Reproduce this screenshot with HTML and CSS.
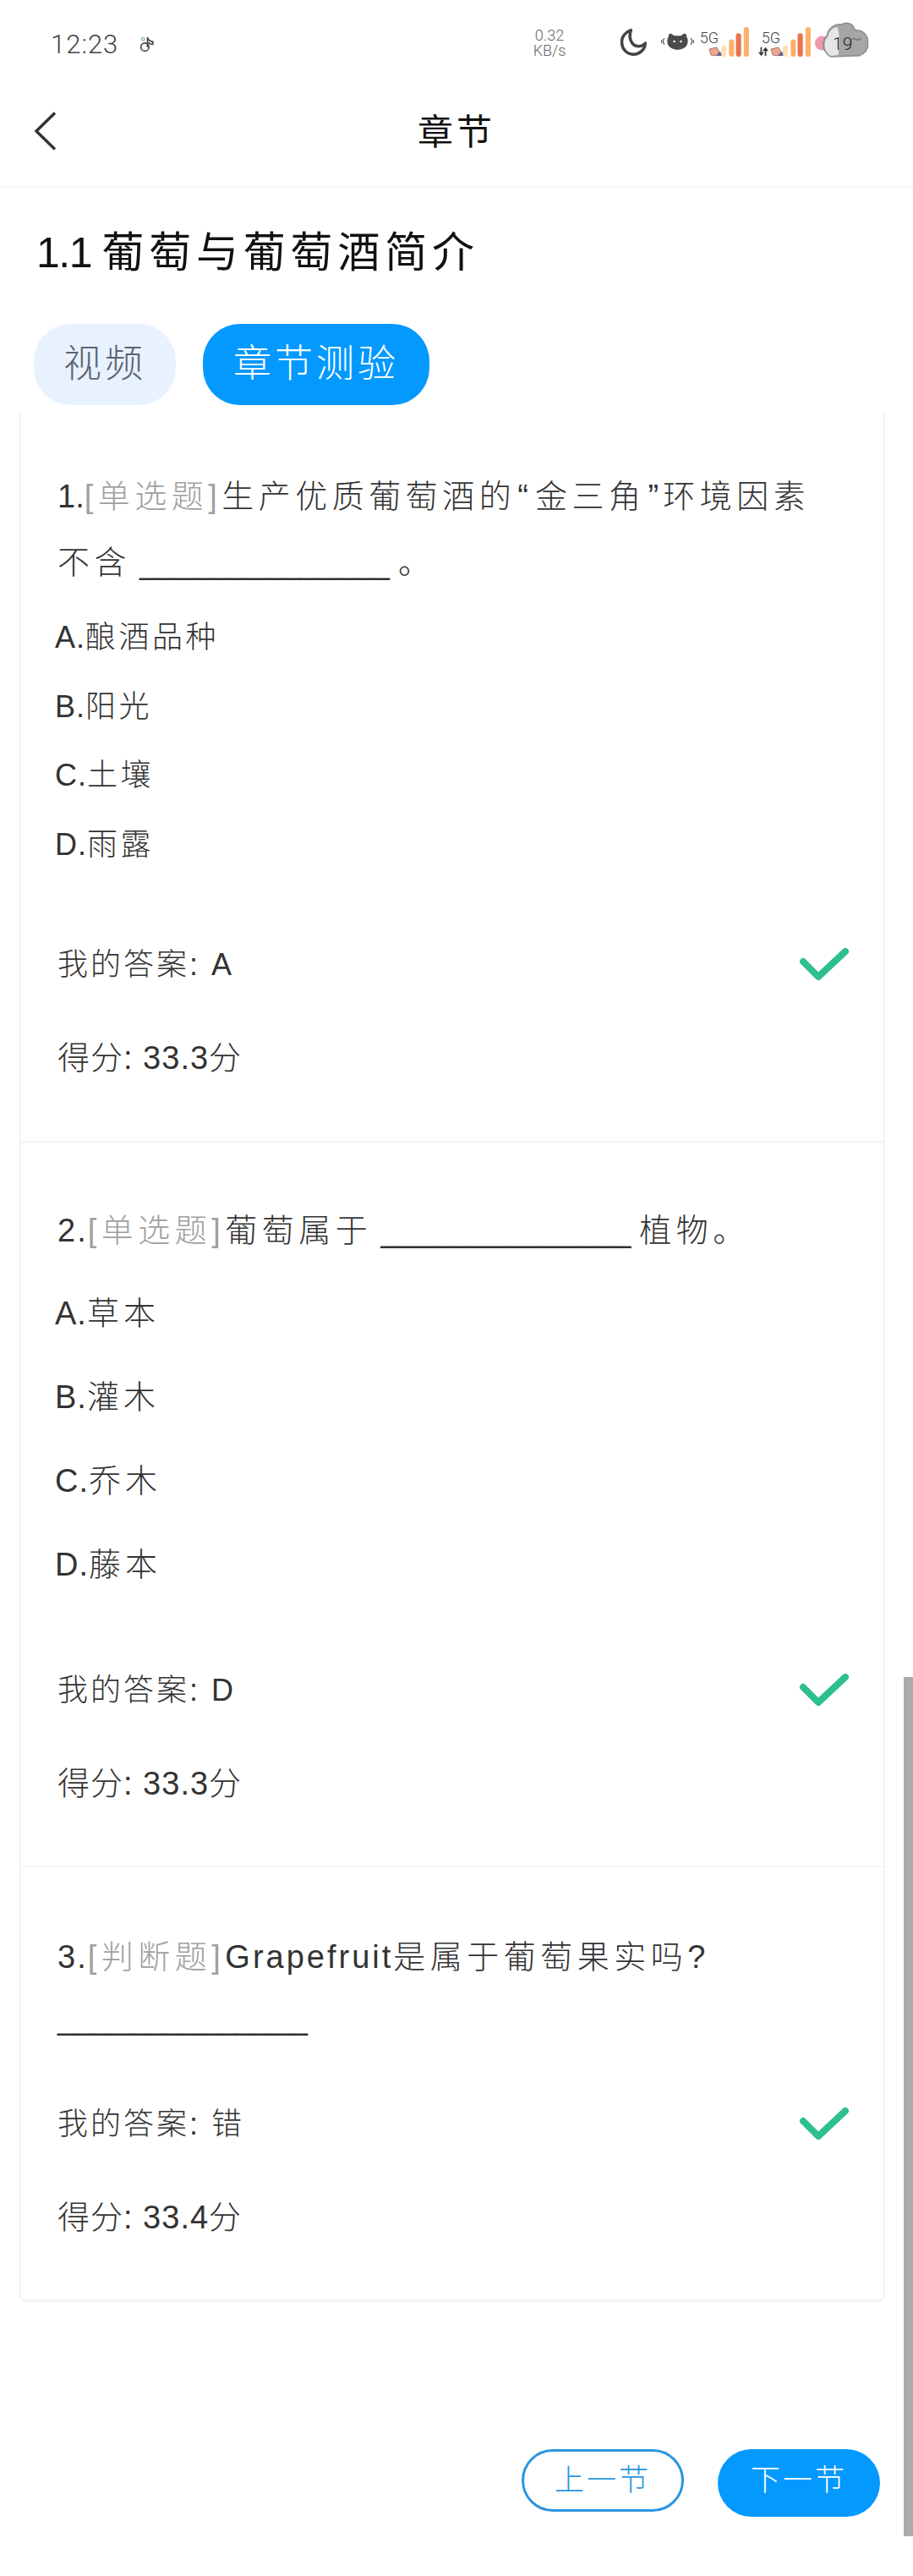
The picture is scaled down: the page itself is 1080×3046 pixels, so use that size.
FILE: index.html
```html
<!DOCTYPE html>
<html lang="zh-CN">
<head>
<meta charset="utf-8">
<title>章节</title>
<link rel="stylesheet" href="styles.css">
</head>
<body>
<div class="page">
  <header class="status">
    <div class="status-left">
      <span class="clock">12:23</span>
      <svg class="tiktok" viewBox="0 0 20 20" fill="none" stroke="#444" stroke-width="1.6"><circle cx="7" cy="13" r="4.5"/><path d="M10 13V2c.6 3 3 4.5 6 5v3c-2 0-4-1-5-2"/><circle cx="5" cy="4" r="1.6" stroke="#6aa" stroke-width="1"/></svg>
    </div>
    <div class="status-right">
      <div class="speed"><span>0.32</span><span>KB/s</span></div>
      <svg class="moon" viewBox="0 0 32 32" fill="none"><path d="M13 2.500C6.500 4.500 2.500 10 2.500 16a13.500 13.500 0 0 0 27 1.500c-2 2.500-5 3.500-8 3.500C14 21 9.500 12 13 2.500z" stroke="#444" stroke-width="3.400" stroke-linejoin="round"/></svg>
      <svg class="cat" viewBox="0 0 40 22"><path d="M9 5c0-3 2-4 4-3l3 2h8l3-2c2-1 4 0 4 3 2 3 2 8 0 11-2 3-7 5-11 5s-9-2-11-5c-2-3-2-8 0-11z" fill="#4a4a4a"/><circle cx="16" cy="11" r="1.300" fill="#fff"/><circle cx="24" cy="11" r="1.300" fill="#fff"/><path d="M4 7c-2 2-2 6 0 8M36 7c2 2 2 6 0 8M1 9c-.7 1-.7 3 0 4M39 9c.7 1 .7 3 0 4" stroke="#555" stroke-width="1.300" fill="none"/></svg>
      <div class="signal">
        <div class="signal-label">
          <span class="net">5G</span>
          <svg class="pig" viewBox="0 0 20 12"><path d="M9 3l11 8H9z" fill="#5a5fa8"/><path d="M1 3l9-2 3 6-4 4-6-1z" fill="#e8a890" stroke="#a4604c" stroke-width=".8"/></svg>
        </div>
        <svg class="bars" viewBox="0 0 32 34"><rect x="0" y="21" width="6" height="13" rx="3" fill="#fbe3b5"/><rect x="9" y="14" width="6" height="20" rx="3" fill="#fbb26b"/><rect x="17" y="7" width="6" height="27" rx="3" fill="#e8734f"/><rect x="26" y="0" width="6" height="34" rx="3" fill="#fbb26b"/></svg>
      </div>
      <div class="signal signal-second">
        <div class="signal-label signal-label-wide">
          <span class="net">5G</span>
          <div class="signal-sub">
            <svg class="arrows" viewBox="0 0 14 12"><path d="M3 0h2v7h3L4 12 0 7h3zM9 12h2V5h3L10 0 6 5h3z" fill="#333"/></svg>
            <svg class="pig" viewBox="0 0 20 12"><path d="M9 3l11 8H9z" fill="#5a5fa8"/><path d="M1 3l9-2 3 6-4 4-6-1z" fill="#e8a890" stroke="#a4604c" stroke-width=".8"/></svg>
          </div>
        </div>
        <svg class="bars" viewBox="0 0 32 34"><rect x="0" y="21" width="6" height="13" rx="3" fill="#fbe3b5"/><rect x="9" y="14" width="6" height="20" rx="3" fill="#fbb26b"/><rect x="17" y="7" width="6" height="27" rx="3" fill="#e8734f"/><rect x="26" y="0" width="6" height="34" rx="3" fill="#fbb26b"/></svg>
      </div>
      <div class="weather">
        <svg class="cloud" viewBox="0 0 64 42"><circle cx="9" cy="25" r="8.500" fill="#ee97ac"/><path d="M14 36C8 30 10 20 15 16 16 7 24 2 32 3 38-1 46 2 48 10 56 8 64 16 63 25 64 34 56 41 48 40L20 41C17 41 15 38 14 36z" fill="#a6a6a6" stroke="#8c8c8c" stroke-width="1.500"/><path d="M15 36C10 30 12 21 16 17 17 11 21 7 27 6 30 15 30 28 28 39L20 40C18 40 16 38 15 36z" fill="#e6e6e6"/><path d="M44 21c2-3 4-1 6 0s3 0 5-2" stroke="#777" stroke-width="1.500" fill="none"/></svg>
        <span class="temp">19</span>
      </div>
    </div>
  </header>

  <nav class="nav">
    <svg class="back" viewBox="0 0 26 46" fill="none"><path d="M24 1.500L2 23l22 21.500" stroke="#333" stroke-width="3.400"/></svg>
    <h1 class="nav-title">章节</h1>
  </nav>

  <h2 class="chapter"><span class="chapter-num">1.1 </span>葡萄与葡萄酒简介</h2>

  <div class="tabs">
    <span class="tab">视频</span>
    <span class="tab tab-active">章节测验</span>
  </div>

  <main class="card">
    <section class="sec sec-first">
      <p class="question"><span class="num">1.</span><span class="kind">[单选题]</span>生产优质葡萄酒的<span class="quote quote-open">“</span>金三角<span class="quote quote-close">”</span>环境因素<br>不含 <span class="blank">______________</span> 。</p>
      <ul class="options">
        <li><span class="lab">A.</span>酿酒品种</li>
        <li><span class="lab">B.</span>阳光</li>
        <li><span class="lab">C.</span>土壤</li>
        <li><span class="lab">D.</span>雨露</li>
      </ul>
      <div class="answer">
        <span>我的答案: A</span>
        <svg class="check" viewBox="0 0 60 42" fill="none"><path d="M5 16L23 34 55 4" stroke="#2cc08c" stroke-width="8" stroke-linecap="round" stroke-linejoin="round"/></svg>
      </div>
      <div class="score">得分: 33.3分</div>
    </section>

    <section class="sec sec-second">
      <p class="question"><span class="num num-wide">2.</span><span class="kind">[单选题]</span>葡萄属于 <span class="blank">______________</span> 植物。</p>
      <ul class="options options-wide">
        <li><span class="lab">A.</span>草本</li>
        <li><span class="lab">B.</span>灌木</li>
        <li><span class="lab">C.</span>乔木</li>
        <li><span class="lab">D.</span>藤本</li>
      </ul>
      <div class="answer">
        <span>我的答案: D</span>
        <svg class="check" viewBox="0 0 60 42" fill="none"><path d="M5 16L23 34 55 4" stroke="#2cc08c" stroke-width="8" stroke-linecap="round" stroke-linejoin="round"/></svg>
      </div>
      <div class="score">得分: 33.3分</div>
    </section>

    <section class="sec sec-third">
      <p class="question"><span class="num num-wide">3.</span><span class="kind">[判断题]</span><span class="latin">Grapefruit</span>是属于葡萄果实吗?<br><span class="blank">______________</span></p>
      <div class="answer">
        <span>我的答案: 错</span>
        <svg class="check" viewBox="0 0 60 42" fill="none"><path d="M5 16L23 34 55 4" stroke="#2cc08c" stroke-width="8" stroke-linecap="round" stroke-linejoin="round"/></svg>
      </div>
      <div class="score">得分: 33.4分</div>
    </section>
  </main>

  <footer class="pager">
    <span class="btn btn-outline">上一节</span>
    <span class="btn btn-solid">下一节</span>
  </footer>

  <div class="scrollbar"></div>
</div>
</body>
</html>
```
FILE: styles.css
```css
* { box-sizing: border-box; }
html, body { margin: 0; padding: 0; background: #fff; }
body {
  font-family: "Liberation Sans", "Noto Sans CJK SC", sans-serif;
  font-weight: 300;
  color: #333;
}
.page { position: relative; width: 1080px; height: 3046px; overflow: hidden; }

/* status bar */
.status { height: 104px; display: flex; justify-content: space-between; align-items: center; padding: 0 52px 6px 60px; }
.status-left { display: flex; align-items: center; gap: 24px; margin-top: 6px; }
.clock { font-family: Roboto, sans-serif; font-weight: 300; font-size: 31px; letter-spacing: 1px; color: #444; }
.tiktok { width: 21px; height: 21px; }
.status-right { display: flex; align-items: center; }
.speed { display: flex; flex-direction: column; align-items: center; width: 40px; margin-top: 4px; margin-right: 63px; font-family: Roboto, sans-serif; font-size: 18px; line-height: 18px; color: #666; }
.moon { width: 33px; height: 33px; margin-right: 16px; }
.cat { width: 39px; height: 22px; margin-right: 5px; }
.signal { display: flex; align-items: flex-end; gap: 3px; height: 35px; }
.signal-second { margin-left: 5px; }
.signal-label { display: flex; flex-direction: column; align-items: flex-end; width: 24px; }
.signal-label-wide { width: 32px; }
.net { font-family: Roboto, sans-serif; font-size: 18px; line-height: 20px; color: #444; }
.pig { width: 20px; height: 12px; margin-right: -8px; flex: none; }
.signal-sub { display: flex; align-items: center; gap: 2px; }
.arrows { width: 12px; height: 12px; flex: none; }
.bars { width: 33px; height: 35px; }
.weather { position: relative; width: 65px; height: 42px; margin: 0 0 4px 4px; }
.cloud { width: 65px; height: 42px; display: block; }
.temp { position: absolute; left: 22px; top: 14px; font-family: Roboto, sans-serif; font-weight: 300; font-size: 21px; line-height: 24px; color: #222; }

/* nav */
.nav { position: relative; height: 118px; border-bottom: 2px solid #f5f5f5; display: flex; align-items: center; justify-content: center; }
.back { position: absolute; left: 41px; top: 28px; width: 26px; height: 46px; }
.nav-title { margin: 0 0 10px; font-size: 42px; line-height: 60px; font-weight: 400; letter-spacing: 4px; color: #111; }

/* chapter */
.chapter { margin: 47px 0 0 43px; font-size: 50px; line-height: 60px; font-weight: 400; letter-spacing: 5.8px; color: #111; }
.chapter-num { letter-spacing: -1.5px; }

/* tabs */
.tabs { display: flex; gap: 32px; margin: 54px 0 0 40px; }
.tab { height: 96px; padding: 0 35px; border-radius: 44px; background: #e8f2ff; color: #5a6470; font-size: 45px; line-height: 96px; letter-spacing: 4px; }
.tab-active { background: #0499fe; color: #fff; padding: 0 36px; }

/* card */
.card { width: 1024px; margin: 9px 0 0 23px; border: 2px solid #f3f3f3; border-top: 0; border-bottom-width: 3px; border-radius: 0 0 8px 8px; }
.sec { padding: 0 40px 0 43px; border-bottom: 2px solid #f3f3f3; }
.sec:last-child { border-bottom: 0; }
.sec-first { padding-top: 60px; padding-bottom: 68px; }
.sec-second { padding-top: 65px; padding-bottom: 67px; }
.sec-third { padding-top: 70px; padding-bottom: 67px; }
.question { margin: 0; font-size: 38px; line-height: 78px; letter-spacing: 5.5px; word-spacing: -6px; color: #333; }
.sec-third .question { line-height: 72px; }
.num { letter-spacing: 0; }
.num-wide { letter-spacing: 2px; }
.kind { color: #a0a0a0; }
.latin { letter-spacing: 3px; }
.quote { letter-spacing: 0; }
.quote-open { margin: 0 8px 0 2px; }
.quote-close { margin: 0 5px 0 3px; }
.blank { letter-spacing: 0; }
.options { list-style: none; margin: 9px 0 0 -3px; padding: 0; font-size: 36px; line-height: 81.6px; letter-spacing: 3.5px; }
.options-wide { margin-top: 10px; font-size: 38px; line-height: 99px; letter-spacing: 5px; }
.lab { letter-spacing: 1px; }
.answer { display: flex; justify-content: space-between; align-items: center; height: 60px; margin-top: 68px; font-size: 36px; letter-spacing: 3px; }
.sec-second .answer { margin-top: 65px; }
.sec-third .answer { margin-top: 56px; }
.check { width: 60px; height: 42px; margin-top: 10px; }
.score { height: 60px; margin-top: 54px; font-size: 38px; line-height: 60px; letter-spacing: 1px; }

/* pager */
.pager { display: flex; justify-content: flex-end; align-items: flex-start; gap: 40px; margin: 174px 39px 0 0; }
.btn { display: block; width: 192px; text-align: center; font-size: 35px; letter-spacing: 3px; border-radius: 40px; }
.btn-outline { height: 74px; line-height: 68px; border: 3px solid #2a95e0; color: #2a95e0; }
.btn-solid { height: 80px; line-height: 74px; background: #0499fe; color: #fff; }

/* overlay scrollbar */
.scrollbar { position: absolute; left: 1069px; top: 1983px; width: 11px; height: 1016px; background: #ababab; }
```
